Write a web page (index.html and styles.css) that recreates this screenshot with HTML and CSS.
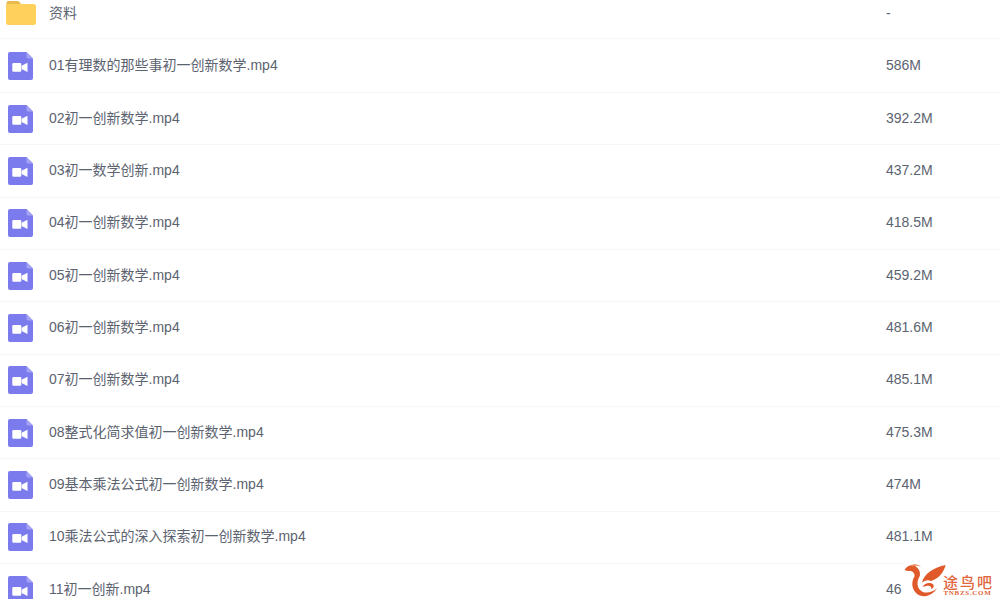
FILE: index.html
```html
<!DOCTYPE html>
<html>
<head>
<meta name="viewport" content="width=device-width, initial-scale=1">
<link rel="stylesheet" href="styles.css">
</head>
<body>

<svg class="defs" width="0" height="0">
  <symbol id="video" viewBox="0 0 25 28">
    <path d="M2 0H18.5L25 6.5V26a2 2 0 0 1-2 2H2a2 2 0 0 1-2-2V2a2 2 0 0 1 2-2Z" fill="#7b7bee"/>
    <path d="M18.5 0L25 6.5H20a1.5 1.5 0 0 1-1.5-1.5Z" fill="#a3a3f6"/>
    <rect x="4.3" y="11" width="9" height="8.8" rx="1.2" fill="#fff"/>
    <path d="M13.6 13.8L19.5 10.8V20L13.6 17Z" fill="#fff"/>
  </symbol>
  <symbol id="folder" viewBox="0 0 30 25">
    <path d="M0.5 6V3a2 2 0 0 1 2-2H11a3 3 0 0 1 2.5 1L15 4V7H0.5Z" fill="#e8b94f"/>
    <rect x="0" y="4" width="30" height="21" rx="2.5" fill="#ffd05c"/>
  </symbol>
</svg>

<ul class="files">
  <li class="file file-first">
    <svg class="icon-folder"><use href="#folder"/></svg>
    <span class="name">资料</span>
    <span class="size">-</span>
  </li>
  <li class="file file-second">
    <svg class="icon-video"><use href="#video"/></svg>
    <span class="name">01有理数的那些事初一创新数学.mp4</span>
    <span class="size">586M</span>
  </li>
  <li class="file">
    <svg class="icon-video"><use href="#video"/></svg>
    <span class="name">02初一创新数学.mp4</span>
    <span class="size">392.2M</span>
  </li>
  <li class="file">
    <svg class="icon-video"><use href="#video"/></svg>
    <span class="name">03初一数学创新.mp4</span>
    <span class="size">437.2M</span>
  </li>
  <li class="file">
    <svg class="icon-video"><use href="#video"/></svg>
    <span class="name">04初一创新数学.mp4</span>
    <span class="size">418.5M</span>
  </li>
  <li class="file">
    <svg class="icon-video"><use href="#video"/></svg>
    <span class="name">05初一创新数学.mp4</span>
    <span class="size">459.2M</span>
  </li>
  <li class="file">
    <svg class="icon-video"><use href="#video"/></svg>
    <span class="name">06初一创新数学.mp4</span>
    <span class="size">481.6M</span>
  </li>
  <li class="file">
    <svg class="icon-video"><use href="#video"/></svg>
    <span class="name">07初一创新数学.mp4</span>
    <span class="size">485.1M</span>
  </li>
  <li class="file">
    <svg class="icon-video"><use href="#video"/></svg>
    <span class="name">08整式化简求值初一创新数学.mp4</span>
    <span class="size">475.3M</span>
  </li>
  <li class="file">
    <svg class="icon-video"><use href="#video"/></svg>
    <span class="name">09基本乘法公式初一创新数学.mp4</span>
    <span class="size">474M</span>
  </li>
  <li class="file">
    <svg class="icon-video"><use href="#video"/></svg>
    <span class="name">10乘法公式的深入探索初一创新数学.mp4</span>
    <span class="size">481.1M</span>
  </li>
  <li class="file">
    <svg class="icon-video"><use href="#video"/></svg>
    <span class="name">11初一创新.mp4</span>
    <span class="size">46</span>
  </li>
</ul>

<div class="watermark">
  <svg class="wm-logo" viewBox="0 0 130 108">
    <!-- beak and neck, then the outer curl of the bird -->
    <path d="M2 20C8 8 24 2 36 10C46 17 50 28 48 38C40 52 38 66 46 78C56 92 78 94 100 76C84 100 56 108 38 92C22 78 22 56 32 40C33 30 26 24 16 24C11 24 6 23 2 20Z" fill="#e0592a"/>
    <path d="M22 6C32 0 46 4 52 12C46 8 36 6 26 10Z" fill="#ee8a5c"/>
    <!-- wing -->
    <path d="M54 60C62 30 90 14 126 6C120 26 108 46 82 54C72 50 62 52 54 60Z" fill="#e0592a"/>
    <!-- inner hook -->
    <path d="M56 72C62 60 78 56 88 64C92 70 90 76 82 78C84 72 80 68 74 68C68 68 62 70 56 72Z" fill="#e0592a"/>
  </svg>
  <div class="wm-text">
    <span class="wm-cn">途鸟吧</span>
    <span class="wm-en">TNBZS.COM</span>
  </div>
</div>

</body>
</html>
```

FILE: styles.css
```css
body {
  margin: 0;
  height: 599px;
  overflow: hidden;
  position: relative;
  background-color: #fff;
  font-family: "Liberation Sans", "Noto Sans CJK SC", sans-serif;
  font-size: 14px;
  color: #5c6370;
}

.defs {
  display: block;
}

.files {
  list-style: none;
  margin: 0;
  padding: 0;
}

.file {
  display: flex;
  align-items: center;
  box-sizing: border-box;
  height: 52.33px;
  padding-left: 6px;
  border-bottom: 1px solid #f7f7f8;
}

.file-first {
  height: 39px;
  align-items: flex-start;
}

.file-second {
  height: 54px;
}

.icon-video {
  width: 25px;
  height: 28px;
  margin-left: 2px;
  flex-shrink: 0;
}

.icon-folder {
  width: 30px;
  height: 25px;
  flex-shrink: 0;
}

.name {
  margin-left: 16px;
  width: 837px;
  flex-shrink: 0;
  padding-bottom: 4px;
}

.size {
  padding-bottom: 2px;
}

.file-first .name {
  margin-left: 13px;
  line-height: 26px;
}

.file-first .size {
  line-height: 26px;
}

.watermark {
  position: absolute;
  right: 0;
  bottom: 0;
  width: 96px;
  height: 36px;
  display: flex;
  align-items: flex-start;
  background-color: #fff;
}

.wm-logo {
  width: 43px;
  height: 36px;
  flex-shrink: 0;
}

.wm-text {
  display: flex;
  flex-direction: column;
  align-items: center;
  margin-left: -4px;
  padding-top: 13px;
  width: 49px;
  color: #e0663c;
}

.wm-cn {
  font-size: 15px;
  font-weight: 500;
  line-height: 14px;
  letter-spacing: 2px;
  margin-right: -2px;
}

.wm-en {
  font-family: "Liberation Serif", serif;
  font-size: 7px;
  font-weight: bold;
  line-height: 7px;
  letter-spacing: 0.7px;
}
```
